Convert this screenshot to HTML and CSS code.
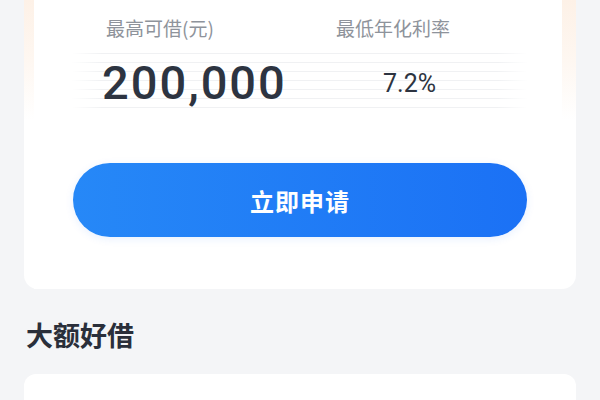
FILE: index.html
```html
<!DOCTYPE html>
<html lang="zh-CN">
<head>
<meta charset="utf-8">
<title>大额好借</title>
<link rel="stylesheet" href="styles.css">
</head>
<body>
<div class="page">
  <section class="card">
    <div class="panel">
      <div class="labels">
        <span class="label">最高可借(元)</span>
        <span class="label">最低年化利率</span>
      </div>
      <div class="stats">
        <span class="amount">200,000</span>
        <span class="rate">7.2%</span>
      </div>
      <button class="apply" type="button">立即申请</button>
    </div>
  </section>
  <h2 class="title">大额好借</h2>
  <section class="card2"></section>
</div>
</body>
</html>
```

FILE: styles.css
```css
html, body {
  margin: 0;
  padding: 0;
  background: #f4f5f7;
}
body {
  font-family: "Noto Sans CJK SC", "Noto Sans", sans-serif;
  color: #2b303b;
  overflow: hidden;
}
.page {
  padding: 0 24px;
}
.card {
  background: linear-gradient(180deg, #fdf1e7 0px, #fef7f1 60px, #ffffff 120px);
  border-radius: 0 0 14px 14px;
  padding: 0 14px 0 10px;
}
.panel {
  background: #ffffff;
  padding: 14px 0 52px;
}
.labels {
  display: grid;
  grid-template-columns: 230px 1fr;
  padding-left: 72px;
}
.label {
  font-size: 19px;
  line-height: 27px;
  color: #8e939b;
}
.stats {
  margin: 12px 0 0 38px;
  width: 455px;
  height: 60px;
  box-sizing: border-box;
  padding-left: 30px;
  display: grid;
  grid-template-columns: 281px auto;
  align-items: center;
  background:
    linear-gradient(90deg, #ffffff 0, rgba(255,255,255,0) 30px, rgba(255,255,255,0) 425px, #ffffff 455px),
    repeating-linear-gradient(180deg, #f0f1f3 0, #f0f1f3 1px, transparent 1px, transparent 9px);
}
.amount {
  font-family: Roboto, "Liberation Sans", sans-serif;
  font-weight: 500;
  font-size: 47px;
  line-height: 56px;
  letter-spacing: 2px;
  color: #2d3441;
}
.rate {
  font-family: Roboto, "Liberation Sans", sans-serif;
  font-weight: 400;
  font-size: 25px;
  line-height: 30px;
  color: #2d3441;
  padding-top: 2px;
}
.apply {
  display: block;
  margin: 50px 0 0 39px;
  width: 454px;
  height: 74px;
  border: none;
  border-radius: 37px;
  background: linear-gradient(90deg, #2688f7 0%, #1b71f5 100%);
  box-shadow: 0 2px 8px rgba(30, 110, 245, 0.1);
  color: #ffffff;
  font-family: "Noto Sans CJK SC", sans-serif;
  font-size: 24px;
  font-weight: 700;
  letter-spacing: 1px;
}
.title {
  margin: 28px 0 21px 2px;
  font-size: 27px;
  line-height: 36px;
  font-weight: 700;
  color: #2a2f3a;
}
.card2 {
  height: 60px;
  background: #ffffff;
  border-radius: 12px;
}
```
